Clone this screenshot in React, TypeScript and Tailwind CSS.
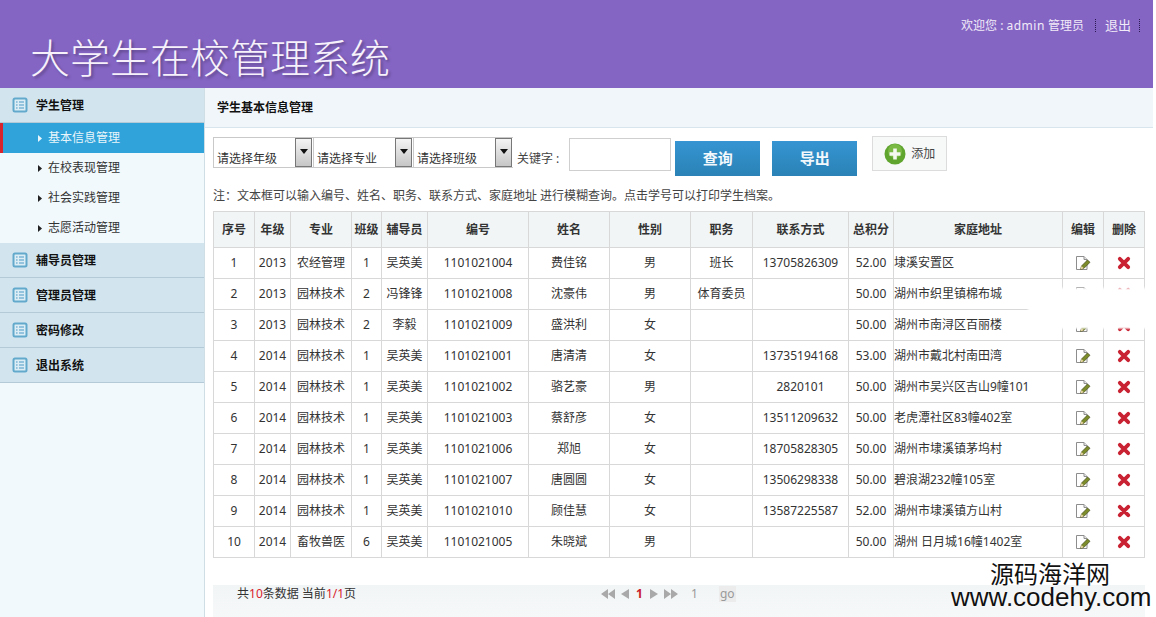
import React from "react";

const FONT = '"Noto Sans","Noto Sans CJK SC",sans-serif';

const ListIcon = () => (
  <svg width="16" height="16" viewBox="0 0 16 16" className="shrink-0">
    <rect x="0.5" y="0.5" width="15" height="15" rx="2.5" fill="#62a9cc" />
    <rect x="2.5" y="2.5" width="11" height="11" rx="0.5" fill="#dcedf6" />
    <path d="M4 5h1.6M4 8h1.6M4 11h1.6M7 5h5M7 8h5M7 11h5" stroke="#4d9bc3" strokeWidth="1.2" />
  </svg>
);

const EditIcon = () => (
  <svg width="16" height="16" viewBox="0 0 16 16" className="mx-auto block">
    <path d="M1.5 1.5H9L12 4.5V14.5H1.5Z" fill="#fff" stroke="#8d8d8d" />
    <path d="M9 1.5V4.5H12" fill="#e8e8e8" stroke="#8d8d8d" />
    <path d="M5.5 14.5L6.5 11L12.5 5L15 7.3L9 13.3Z" fill="#7d8c2b" stroke="#3e4716" strokeWidth="0.7" />
    <path d="M5.5 14.5L6.5 11L8.8 13.2Z" fill="#e9d6a6" />
  </svg>
);

const DelIcon = () => (
  <svg width="14" height="14" viewBox="0 0 14 14" className="mx-auto block">
    <path d="M2.8 2.8L11.2 11.2M11.2 2.8L2.8 11.2" stroke="#c92232" strokeWidth="3.8" strokeLinecap="round" />
  </svg>
);

const Select = ({ label }: { label: string }) => (
  <div className="flex h-[31px] w-[100px] items-stretch border-y border-l border-[#c9c9c9] bg-white">
    <span className="flex-1 self-end pl-[3px] text-[12px] leading-[16px] text-[#333]">{label}</span>
    <span className="mr-[1px] flex w-[17px] items-start justify-center border border-[#777] bg-gradient-to-b from-[#f4f4f4] to-[#c6c6c6] pt-[10px]">
      <svg width="8" height="5" viewBox="0 0 8 5"><path d="M0 0H8L4 5Z" fill="#111" /></svg>
    </span>
  </div>
);

const cols = [41, 36, 61, 30, 46, 101, 81, 81, 62, 96, 45, 169, 41, 41];
const heads = ["序号", "年级", "专业", "班级", "辅导员", "编号", "姓名", "性别", "职务", "联系方式", "总积分", "家庭地址", "编辑", "删除"];
const rows = [
  ["1", "2013", "农经管理", "1", "吴英美", "1101021004", "费佳铭", "男", "班长", "13705826309", "52.00", "埭溪安置区"],
  ["2", "2013", "园林技术", "2", "冯锋锋", "1101021008", "沈豪伟", "男", "体育委员", "", "50.00", "湖州市织里镇棉布城"],
  ["3", "2013", "园林技术", "2", "李毅", "1101021009", "盛洪利", "女", "", "", "50.00", "湖州市南浔区百丽楼"],
  ["4", "2014", "园林技术", "1", "吴英美", "1101021001", "唐清清", "女", "", "13735194168", "53.00", "湖州市戴北村南田湾"],
  ["5", "2014", "园林技术", "1", "吴英美", "1101021002", "骆艺豪", "男", "", "2820101", "50.00", "湖州市吴兴区吉山9幢101"],
  ["6", "2014", "园林技术", "1", "吴英美", "1101021003", "蔡舒彦", "女", "", "13511209632", "50.00", "老虎潭社区83幢402室"],
  ["7", "2014", "园林技术", "1", "吴英美", "1101021006", "郑旭", "女", "", "18705828305", "50.00", "湖州市埭溪镇茅坞村"],
  ["8", "2014", "园林技术", "1", "吴英美", "1101021007", "唐圆圆", "女", "", "13506298338", "50.00", "碧浪湖232幢105室"],
  ["9", "2014", "园林技术", "1", "吴英美", "1101021010", "顾佳慧", "女", "", "13587225587", "52.00", "湖州市埭溪镇方山村"],
  ["10", "2014", "畜牧兽医", "6", "吴英美", "1101021005", "朱晓斌", "男", "", "", "50.00", "湖州 日月城16幢1402室"],
];

const MenuHead = ({ label }: { label: string }) => (
  <div className="flex h-[35px] items-center gap-2 border-b border-[#b4cad6] bg-[#d2e5ef] pl-3 text-[12px] font-bold text-[#111]">
    <ListIcon />
    <span className="pt-[2px]">{label}</span>
  </div>
);

const SubItem = ({ label, active }: { label: string; active?: boolean }) => (
  <div
    className={
      active
        ? "flex h-[30px] items-center gap-[6px] border-l-[3px] border-[#d9232d] bg-[#2fa3da] pl-[35px] text-[12px] text-[#e8f5fb]"
        : "flex h-[30px] items-center gap-[6px] pl-[38px] text-[12px] text-[#333]"
    }
  >
    <svg width="4" height="7" viewBox="0 0 4 7"><path d="M0 0L4 3.5L0 7Z" fill={active ? "#e8f5fb" : "#222"} /></svg>
    <span>{label}</span>
  </div>
);

export default function App() {
  return (
    <div className="relative h-[617px] w-[1156px] overflow-hidden bg-white" style={{ fontFamily: FONT }}>
      <div className="w-[1153px]">
        <header className="flex h-[88px] items-start justify-between bg-[#8565c4] pl-[30px] pr-[13px]">
          <h1 className="mt-[33px] text-[40px] font-light leading-[50px] text-[#f6f1fb] [text-shadow:2px_2px_3px_rgba(0,0,0,0.3)]">
            大学生在校管理系统
          </h1>
          <div className="mt-[17px] flex items-center text-[12px] leading-[17px] text-[#f1ebf8]">
            <span>欢迎您 : <span className="tracking-[0.5px]">admin</span> 管理员</span>
            <span className="ml-[11px] h-[13px] border-l border-dotted border-[#2b1a52]" />
            <span className="ml-[9px] text-[13px]">退出</span>
            <span className="ml-[8px] h-[13px] border-l border-dotted border-[#2b1a52]" />
          </div>
        </header>

        <div className="flex h-[529px]">
          <aside className="w-[205px] shrink-0 border-r border-[#cfdde5] bg-[#f1f9fd]">
            <MenuHead label="学生管理" />
            <SubItem label="基本信息管理" active />
            <SubItem label="在校表现管理" />
            <SubItem label="社会实践管理" />
            <SubItem label="志愿活动管理" />
            <MenuHead label="辅导员管理" />
            <MenuHead label="管理员管理" />
            <MenuHead label="密码修改" />
            <MenuHead label="退出系统" />
          </aside>

          <main className="min-w-0 flex-1">
            <div className="flex h-[40px] items-center border-b border-[#d9e5ec] bg-[#f1f6fa] pl-3 text-[12px] font-bold text-[#111]">
              学生基本信息管理
            </div>
            <div className="pl-2 pr-2">
              <div className="mt-[8px] flex items-start">
                <div className="mt-[1px] flex">
                  <Select label="请选择年级" />
                  <Select label="请选择专业" />
                  <Select label="请选择班级" />
                </div>
                <span className="ml-1 mt-[14px] text-[12px] leading-[17px] text-[#444]">关键字 :</span>
                <div className="ml-[10px] mt-[2px] h-[33px] w-[102px] border border-[#cfcfcf] bg-white" />
                <button className="ml-1 mt-[5px] h-[35px] w-[85px] bg-gradient-to-b from-[#3695d2] to-[#2a82b6] text-[15px] font-bold text-[#f2f8fc]">查询</button>
                <button className="ml-3 mt-[5px] h-[35px] w-[85px] bg-gradient-to-b from-[#3695d2] to-[#2a82b6] text-[15px] font-bold text-[#f2f8fc]">导出</button>
                <div className="ml-[15px] flex h-[35px] w-[75px] items-center gap-[5px] border border-[#dcdcdc] bg-[#f7f8f8] pl-[11px] text-[12px] text-[#444]">
                  <svg width="22" height="22" viewBox="0 0 22 22" className="shrink-0">
                    <circle cx="11" cy="11" r="10.5" fill="#5fa52e" />
                    <circle cx="11" cy="8" r="7" fill="#8cc653" opacity="0.6" />
                    <path d="M11 5.5V16.5M5.5 11H16.5" stroke="#f4f8ee" strokeWidth="3.6" />
                  </svg>
                  <span>添加</span>
                </div>
              </div>

              <p className="mt-[11px] text-[12px] leading-[17px] text-[#444]">
                注：文本框可以输入编号、姓名、职务、联系方式、家庭地址 进行模糊查询。点击学号可以打印学生档案。
              </p>

              <table className="mt-[7px] w-[931px] table-fixed border-collapse text-[12px] text-[#333]">
                <colgroup>
                  {cols.map((w, i) => <col key={i} style={{ width: w }} />)}
                </colgroup>
                <thead>
                  <tr className="h-[36px] bg-[#f1f5f6]">
                    {heads.map((h) => (
                      <th key={h} className="border border-[#d8d8d8] p-0 text-center font-bold text-[#333]">{h}</th>
                    ))}
                  </tr>
                </thead>
                <tbody>
                  {rows.map((r) => (
                    <tr key={r[0]} className="h-[31px]">
                      {r.map((c, i) => (
                        <td
                          key={i}
                          className={
                            i === 11
                              ? "overflow-hidden whitespace-nowrap border border-[#d8d8d8] p-0 text-left"
                              : "overflow-hidden whitespace-nowrap border border-[#d8d8d8] p-0 text-center"
                          }
                        >
                          {c}
                        </td>
                      ))}
                      <td className="border border-[#d8d8d8] p-0"><EditIcon /></td>
                      <td className="border border-[#d8d8d8] p-0"><DelIcon /></td>
                    </tr>
                  ))}
                </tbody>
              </table>

              <div className="mt-[27px] flex h-[40px] w-[932px] items-start bg-gradient-to-b from-[#f2f5f6] to-[#f7f9f9] pt-[1px] text-[12px] leading-[16px] text-[#333]">
                <span className="ml-6">共<span className="text-[#d9232d]">10</span>条数据 当前<span className="text-[#d9232d]">1/1</span>页</span>
                <div className="ml-[245px] flex items-center gap-[5px]">
                  <svg width="15" height="10" viewBox="0 0 15 10"><path d="M7 0V10L0 5ZM14 0V10L7 5Z" fill="#a9a9a9" /></svg>
                  <svg width="9" height="10" viewBox="0 0 9 10"><path d="M8 0V10L0 5Z" fill="#a9a9a9" /></svg>
                  <span className="px-[1px] font-bold text-[#c9202c]">1</span>
                  <svg width="9" height="10" viewBox="0 0 9 10"><path d="M1 0V10L9 5Z" fill="#a9a9a9" /></svg>
                  <svg width="15" height="10" viewBox="0 0 15 10"><path d="M1 0V10L8 5ZM8 0V10L15 5Z" fill="#a9a9a9" /></svg>
                  <span className="ml-[8px] w-[23px] text-[#999]">1</span>
                  <span className="bg-[#ececec] px-[1px] text-[#999]">go</span>
                </div>
              </div>
            </div>
          </main>
        </div>
      </div>

      {/* patched-out area over the table's right edge */}
      <div className="absolute left-[1056px] top-[288px] h-[40px] w-[100px] bg-white blur-[1px]" />
      <div className="absolute left-[1028px] top-[306px] h-[22px] w-[128px] bg-white blur-[1px]" />

      {/* watermark */}
      <div className="absolute left-[951px] top-[563px] w-[205px] text-[#111] [text-shadow:0_0_2px_#fff]" style={{ fontFamily: '"Liberation Sans","Noto Sans CJK SC",sans-serif' }}>
        <div className="pl-[39px] text-[24px] leading-[24px]">源码海洋网</div>
        <div className="whitespace-nowrap text-left text-[26px] leading-[20px]">www.codehy.com</div>
      </div>
    </div>
  );
}
